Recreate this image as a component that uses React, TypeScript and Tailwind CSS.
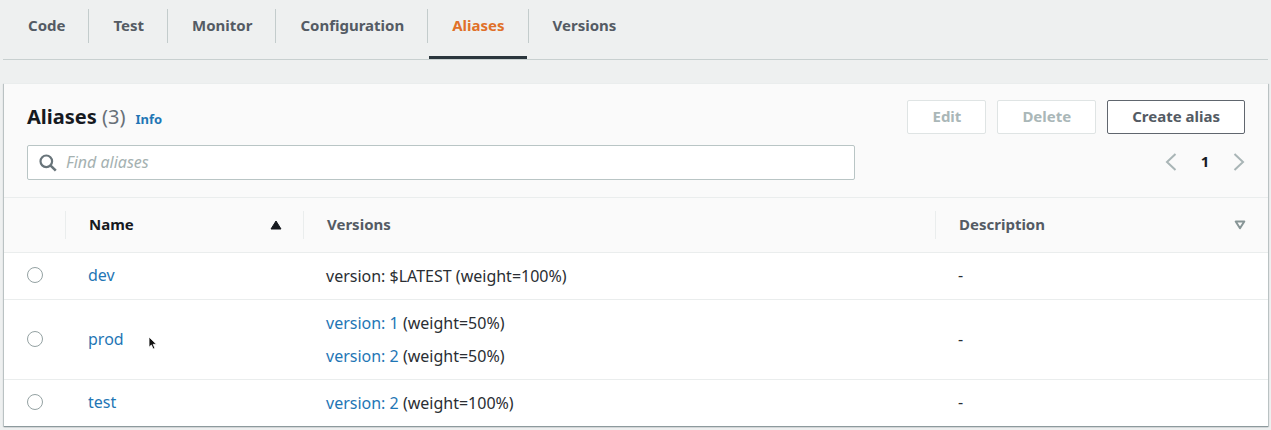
import { useState } from "react";

const tabs = ["Code", "Test", "Monitor", "Configuration", "Aliases", "Versions"];

type Version = { label: string; weight: string; linked: boolean };
type Alias = { name: string; versions: Version[]; description: string };

const aliases: Alias[] = [
  {
    name: "dev",
    versions: [{ label: "version: $LATEST", weight: "(weight=100%)", linked: false }],
    description: "-",
  },
  {
    name: "prod",
    versions: [
      { label: "version: 1", weight: "(weight=50%)", linked: true },
      { label: "version: 2", weight: "(weight=50%)", linked: true },
    ],
    description: "-",
  },
  {
    name: "test",
    versions: [{ label: "version: 2", weight: "(weight=100%)", linked: true }],
    description: "-",
  },
];

function Tabs() {
  return (
    <nav aria-label="Function sections" className="border-b border-[#c8d0d0] pl-px">
      <ul className="flex">
        {tabs.map((tab, i) => {
          const active = tab === "Aliases";
          return (
            <li key={tab} className="flex items-start">
              {i > 0 && <span className="mt-[9px] h-[34px] w-px bg-[#c3cccc]" />}
              <a
                href={"#" + tab.toLowerCase()}
                aria-current={active ? "page" : undefined}
                className={
                  active
                    ? "mx-px block border-b-3 border-[#2b363d] pr-[22px] pl-[23px] pb-[5px] text-[15px] leading-[51px] font-bold text-[#e07029]"
                    : "block border-b-3 border-transparent pr-[23px] pl-6 pb-[5px] text-[15px] leading-[51px] font-bold text-[#545b64]"
                }
              >
                {tab}
              </a>
            </li>
          );
        })}
      </ul>
    </nav>
  );
}

function Pointer() {
  return (
    <svg
      aria-hidden="true"
      className="absolute top-1/2 left-[82px] -mt-1 h-[15px] w-[10px]"
      viewBox="0 0 10 15"
    >
      <path
        d="M1 1v10.2l2.4-2.2 1.7 4 1.8-.8-1.7-3.9h3.3z"
        fill="#111"
        stroke="#fff"
        strokeWidth="0.8"
      />
    </svg>
  );
}

export default function App() {
  const [selected, setSelected] = useState("");
  const [query, setQuery] = useState("");

  return (
    <div className="min-h-screen bg-[#eef0f0] px-[3px] font-['Noto_Sans',sans-serif] text-[15px] text-[#2a2e33]">
      <Tabs />
      <section className="mt-[23px] ml-px border-t border-[#eaeded] bg-white shadow-[0_1px_1px_0_#8d9a9d,1px_1px_1px_0_#c3cbcc,-1px_1px_1px_0_#c3cbcc]">
        <header className="bg-[#fafafa] px-[23px] pt-4 pb-[17px]">
          <div className="flex items-center justify-between">
            <div className="flex items-baseline gap-[10px]">
              <h2 className="text-[20px] leading-[34px] font-bold text-[#16191f]">
                Aliases <span className="font-normal text-[#687078]">(3)</span>
              </h2>
              <a href="#info" className="text-[13px] font-bold text-[#1f76b5]">
                Info
              </a>
            </div>
            <div className="flex gap-[11px] font-bold">
              <button
                type="button"
                disabled
                className="h-[34px] rounded-xs border border-[#dfe4e4] bg-white px-6 pb-[2px] text-[#aab7b8]"
              >
                Edit
              </button>
              <button
                type="button"
                disabled
                className="h-[34px] rounded-xs border border-[#dfe4e4] bg-white px-6 pb-[2px] text-[#aab7b8]"
              >
                Delete
              </button>
              <button
                type="button"
                className="h-[34px] rounded-xs border border-[#60666e] bg-white px-6 pb-[2px] text-[#545b64]"
              >
                Create alias
              </button>
            </div>
          </div>
          <div className="mt-[11px] flex items-center justify-between">
            <label className="flex h-[35px] w-[68%] items-center gap-[9px] rounded-xs border border-[#b9c5c5] bg-white px-[11px]">
              <svg
                aria-hidden="true"
                viewBox="0 0 18 18"
                className="size-[18px] shrink-0 fill-none stroke-[#68747a]"
              >
                <circle cx="7.3" cy="7.3" r="5.8" strokeWidth="2.2" />
                <path d="M11.4 11.4l5.4 5.2" strokeWidth="2.6" />
              </svg>
              <input
                type="text"
                aria-label="Find aliases"
                placeholder="Find aliases"
                value={query}
                onChange={(e) => setQuery(e.target.value)}
                className="w-full bg-transparent pb-px text-base outline-none placeholder:text-[#a5b1b1] placeholder:italic"
              />
            </label>
            <div className="flex items-center pb-[2px]">
              <button type="button" aria-label="Previous page" className="p-0">
                <svg viewBox="0 0 12 18" className="h-[18px] w-3 fill-none stroke-[#a9b5b6] stroke-2">
                  <path d="M10.5 1L2 9l8.5 8" />
                </svg>
              </button>
              <span className="w-14 text-center font-bold text-[#16191f]">1</span>
              <button type="button" aria-label="Next page" className="p-0">
                <svg viewBox="0 0 12 18" className="h-[18px] w-3 fill-none stroke-[#a9b5b6] stroke-2">
                  <path d="M1.5 1L10 9l-8.5 8" />
                </svg>
              </button>
            </div>
          </div>
        </header>
        <table className="w-full table-fixed border-collapse text-left">
          <colgroup>
            <col className="w-[62px]" />
            <col className="w-[238px]" />
            <col className="w-1/2" />
            <col />
          </colgroup>
          <thead className="border-y border-[#eaeded] bg-[#fafafa] text-[#545b64]">
            <tr>
              <th scope="col" aria-label="Select" className="p-0">
                <div className="h-[28px] border-r border-[#eaeded]" />
              </th>
              <th scope="col" aria-sort="ascending" className="px-0 py-[13px]">
                <div className="flex h-[28px] items-center justify-between border-r border-[#eaeded] pr-[21px] pl-[23px] text-[#16191f]">
                  <span className="pb-[2px]">Name</span>
                  <svg aria-hidden="true" viewBox="0 0 12 10" className="h-[10px] w-3">
                    <path d="M6 1l5 8H1z" fill="#16191f" stroke="#16191f" strokeLinejoin="round" />
                  </svg>
                </div>
              </th>
              <th scope="col" className="p-0">
                <div className="flex h-[28px] items-center border-r border-[#eaeded] pl-[23px]">
                  <span className="pb-[2px]">Versions</span>
                </div>
              </th>
              <th scope="col" className="p-0">
                <div className="flex h-[28px] items-center justify-between pr-[22px] pl-[23px]">
                  <span className="pb-[2px]">Description</span>
                  <svg aria-hidden="true" viewBox="0 0 12 10" className="h-[10px] w-3">
                    <path
                      d="M1.7 1.5h8.6L6 8.2z"
                      fill="none"
                      stroke="#879596"
                      strokeWidth="2"
                      strokeLinejoin="round"
                    />
                  </svg>
                </div>
              </th>
            </tr>
          </thead>
          <tbody className="text-base">
            {aliases.map((alias) => (
              <tr key={alias.name} className="border-b border-[#eaeded] last:border-b-0">
                <td className="p-0 pb-[2px] pl-[23px]">
                  <input
                    type="radio"
                    name="alias"
                    aria-label={"Select " + alias.name}
                    checked={selected === alias.name}
                    onChange={() => setSelected(alias.name)}
                    className="block size-4 appearance-none rounded-full border border-[#95a2a3] bg-white checked:border-[5px] checked:border-[#1f76b5]"
                  />
                </td>
                <td className="relative p-0 pb-[2px] pl-[22px]">
                  <a href={"#" + alias.name} className="text-[#1f76b5]">
                    {alias.name}
                  </a>
                  {alias.name === "prod" && <Pointer />}
                </td>
                <td className="pt-[7px] pr-0 pb-[6px] pl-[22px]">
                  {alias.versions.map((version) => (
                    <div key={version.label} className="leading-[33px]">
                      {version.linked ? (
                        <a href="#version" className="text-[#1f76b5]">
                          {version.label}
                        </a>
                      ) : (
                        version.label
                      )}{" "}
                      {version.weight}
                    </div>
                  ))}
                </td>
                <td className="p-0 pb-[2px] pl-[22px]">{alias.description}</td>
              </tr>
            ))}
          </tbody>
        </table>
      </section>
    </div>
  );
}
